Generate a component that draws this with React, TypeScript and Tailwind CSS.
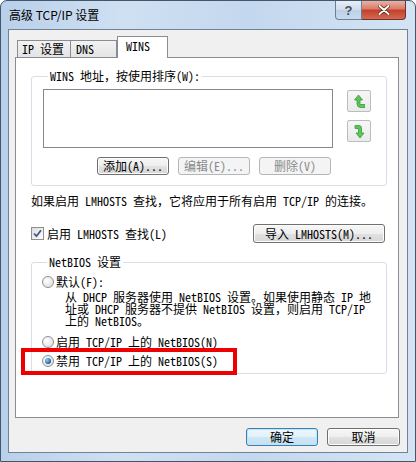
import React from 'react';
import clsx from 'clsx';

const Btn = ({ children, className, disabled, primary }: { children: React.ReactNode; className?: string; disabled?: boolean; primary?: boolean }) => {
    return (
        <div
            className={clsx(
                'flex items-center justify-center rounded-[3px] border leading-[12px] whitespace-nowrap',
                disabled && 'border-[#b3b7ba] bg-[#f4f4f4] text-[#8a8a8a]',
                primary && 'border-[#3c7fb1] bg-[linear-gradient(#eef7fc,#e2f1fa_50%,#d0e8f6_50%,#c3e0f2)] shadow-[inset_0_0_0_1px_#bfe3f7]',
                !disabled && !primary && 'border-[#707070] bg-[linear-gradient(#f7f7f7,#eeeeee_50%,#e2e2e2_50%,#d6d6d6)] shadow-[inset_0_0_0_1px_#fcfcfc]',
                className
            )}
        >
            {children}
        </div>
    );
};

const Radio = ({ checked }: { checked?: boolean }) => {
    return (
        <div className="flex h-[12px] w-[12px] shrink-0 items-center justify-center rounded-full border border-[#8e8f8f] bg-[radial-gradient(circle_at_35%_35%,#ffffff,#d8d8d8)]">
            {checked && <div className="h-[6px] w-[6px] rounded-full bg-[radial-gradient(circle_at_35%_35%,#8fd0f6,#1f5e9c_70%,#123d6e)]" />}
        </div>
    );
};

const ArrowBtn = ({ down }: { down?: boolean }) => {
    return (
        <div className="flex h-[22px] w-[24px] items-center justify-center rounded-[2px] border border-[#b9bdbf] bg-[linear-gradient(#f6f6f6,#e9ebe9)]">
            <svg width="11" height="15" viewBox="0 0 11 15">
                {down ? (
                    <g fill="#5cc65c" stroke="#3a9a3a" strokeWidth="0.8" strokeLinejoin="round">
                        <path d="M1 1.5 H5 Q7.5 1.5 7.5 4 V9 H10 L6 14 L2 9 H4.5 V4.5 H1 Z" />
                    </g>
                ) : (
                    <g fill="#5cc65c" stroke="#3a9a3a" strokeWidth="0.8" strokeLinejoin="round">
                        <path d="M3.5 1 L7.5 6 H5 V10.5 H10 V13.5 H6 Q2 13.5 2 10 V6 H-0.5 Z" transform="translate(1 0)" />
                    </g>
                )}
            </svg>
        </div>
    );
};

export default function App() {
    return (
        <div className="h-[462px] w-[416px] overflow-hidden bg-white">
            <div className="flex h-[462px] w-[416px] flex-col rounded-t-[7px] border border-[#44566c] bg-[linear-gradient(90deg,#b9d0ea,#cfe0f2_30%,#c3d7ee_60%,#d4e4f4)] text-[12px] text-black font-['Noto_Sans_Mono_CJK_SC','Noto_Sans_CJK_SC',sans-serif]">

                {/* title bar */}
                <div className="flex h-[28px] items-start justify-between">
                    <span className="mt-[6px] ml-[8px] leading-[16px] font-['Noto_Sans_CJK_SC',sans-serif] text-[12px] text-black">
                        高级 TCP/IP 设置
                    </span>
                    <div className="mr-[9px] flex">
                        <div className="flex h-[19px] w-[27px] items-center justify-center rounded-bl-[4px] border border-t-0 border-[#6d7f96] bg-[linear-gradient(#e6eef8,#cfdced_50%,#bccfe6_50%,#c9daee)] font-['Liberation_Sans',sans-serif] text-[13px] font-bold leading-none text-[#4a4f57]">
                            ?
                        </div>
                        <div className="flex h-[19px] w-[44px] items-center justify-center rounded-br-[4px] border border-t-0 border-l-0 border-[#6b3329] bg-[linear-gradient(#eab1a3,#d77a66_45%,#c23f2a_50%,#d26a52)]">
                            <svg width="12" height="10" viewBox="0 0 12 10">
                                <path d="M1.5 1 L10.5 9 M10.5 1 L1.5 9" stroke="#5a1a12" strokeWidth="3.4" strokeLinecap="round" />
                                <path d="M1.5 1 L10.5 9 M10.5 1 L1.5 9" stroke="#ffffff" strokeWidth="2" strokeLinecap="round" />
                            </svg>
                        </div>
                    </div>
                </div>

                {/* client area */}
                <div className="ml-[7px] flex h-[424px] w-[400px] flex-col border border-[#6f8298] bg-[#f0f0f0] pt-[6px] pl-[6px] pr-[7px]">

                    {/* tabs */}
                    <div className="flex items-end pl-[2px]">
                        <div className="flex h-[17px] w-[54px] items-center border border-b-0 border-[#898c95] bg-[linear-gradient(#f2f2f2,#e4e4e4)] pl-[4px] leading-[12px]">
                            IP 设置
                        </div>
                        <div className="flex h-[17px] w-[46px] items-center border border-b-0 border-l-0 border-[#898c95] bg-[linear-gradient(#f2f2f2,#e4e4e4)] pl-[5px] leading-[12px]">
                            DNS
                        </div>
                        <div className="relative z-10 -mb-px flex h-[22px] w-[51px] items-start border border-b-0 border-[#898c95] bg-white pt-[3px] pl-[8px] leading-[12px]">
                            WINS
                        </div>
                    </div>

                    {/* tab panel */}
                    <div className="flex h-[361px] w-[384px] flex-col border border-[#898c95] bg-white pt-[12px] pl-[15px] pr-[11px]">

                        <fieldset className="rounded-[3px] border border-[#d5dfe5] pl-[11px] pr-[13px] pb-[10px]">
                            <legend className="ml-[5px] px-[2px] leading-[12px]">WINS 地址，按使用排序(W):</legend>
                            <div className="mt-[7px] flex items-start">
                                <div className="h-[59px] w-[290px] border border-[#828790] bg-white" />
                                <div className="mt-[1px] ml-[14px] flex flex-col gap-[8px]">
                                    <ArrowBtn />
                                    <ArrowBtn down />
                                </div>
                            </div>
                            <div className="mt-[9px] flex w-[290px] justify-end gap-[9px] pr-[2px]">
                                <Btn className="h-[18px] w-[72px]">添加(A)...</Btn>
                                <Btn className="h-[18px] w-[72px]" disabled>编辑(E)...</Btn>
                                <Btn className="h-[18px] w-[72px]" disabled>删除(V)</Btn>
                            </div>
                        </fieldset>

                        <div className="mt-[9px] leading-[12px] whitespace-nowrap">
                            如果启用 LMHOSTS 查找，它将应用于所有启用 TCP/IP 的连接。
                        </div>

                        <div className="mt-[17px] flex h-[19px] items-center justify-between pr-[2px]">
                            <div className="flex items-center">
                                <div className="flex h-[13px] w-[13px] items-center justify-center border border-[#8e8f8f] bg-[linear-gradient(135deg,#dcdcdc,#ffffff)]">
                                    <svg width="9" height="9" viewBox="0 0 9 9">
                                        <path d="M1 4.5 L3.5 7.2 L8 1.2" fill="none" stroke="#3d5a8a" strokeWidth="1.8" />
                                    </svg>
                                </div>
                                <span className="ml-[3px] leading-[12px]">启用 LMHOSTS 查找(L)</span>
                            </div>
                            <Btn className="h-[19px] w-[132px]">导入 LMHOSTS(M)...</Btn>
                        </div>

                        <fieldset className="mt-[13px] rounded-[3px] border border-[#d5dfe5] pl-[10px] pb-[6px]">
                            <legend className="ml-[5px] px-[2px] leading-[12px]">NetBIOS 设置</legend>
                            <div className="mt-[8px] flex items-center leading-[12px]">
                                <Radio />
                                <span className="ml-[2px]">默认(F):</span>
                            </div>
                            <div className="mt-[3px] ml-[23px] leading-[12px] whitespace-nowrap">
                                <div>从 DHCP 服务器使用 NetBIOS 设置。如果使用静态 IP 地</div>
                                <div>址或 DHCP 服务器不提供 NetBIOS 设置，则启用 TCP/IP</div>
                                <div>上的 NetBIOS。</div>
                            </div>
                            <div className="mt-[9px] flex items-center leading-[12px]">
                                <Radio />
                                <span className="ml-[2px]">启用 TCP/IP 上的 NetBIOS(N)</span>
                            </div>
                            <div className="relative mt-[7px] flex items-center leading-[12px]">
                                <Radio checked />
                                <span className="ml-[2px]">禁用 TCP/IP 上的 NetBIOS(S)</span>
                                {/* red highlight box */}
                                <div className="absolute top-[-7px] left-[-21px] h-[27px] w-[216px] border-[4px] border-[#ee0000]" />
                            </div>
                        </fieldset>
                    </div>

                    {/* dialog buttons */}
                    <div className="mt-[10px] flex justify-end gap-[9px]">
                        <Btn className="h-[18px] w-[72px]" primary>确定</Btn>
                        <Btn className="h-[18px] w-[73px]">取消</Btn>
                    </div>
                </div>
            </div>
        </div>
    );
}
